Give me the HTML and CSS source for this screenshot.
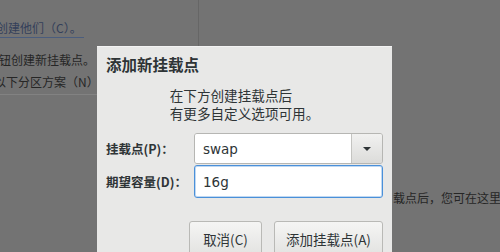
FILE: index.html
```html
<!DOCTYPE html>
<html lang="zh">
<head>
    <meta charset="UTF-8">
    <meta name="viewport" content="width=device-width, initial-scale=1.0">
    <title>添加新挂载点</title>
    <link rel="stylesheet" href="styles.css">
</head>
<body>
    <div class="screen">
        <div class="backdrop">
            <div class="bg-left">
                <p class="bg-line bg-link"><span>创建他们（C）。</span></p>
                <p class="bg-line bg-second">钮创建新挂载点。</p>
                <p class="bg-line bg-third">以下分区方案（N）</p>
            </div>
            <div class="bg-right">
                <p class="bg-note">载点后，您可在这里</p>
            </div>
        </div>

        <div class="dialog">
            <h2 class="dialog-title">添加新挂载点</h2>
            <p class="dialog-msg">在下方创建挂载点后<br>有更多自定义选项可用。</p>

            <div class="form">
                <label class="form-label" for="mount">挂载点(P)：</label>
                <div class="combo">
                    <input id="mount" class="combo-entry" type="text" value="swap">
                    <span class="combo-btn"><span class="arrow"></span></span>
                </div>
                <label class="form-label" for="size">期望容量(D)：</label>
                <input id="size" class="entry focused" type="text" value="16g">
            </div>

            <div class="actions">
                <button class="btn btn-cancel">取消(C)</button>
                <button class="btn btn-add">添加挂载点(A)</button>
            </div>
        </div>
    </div>
</body>
</html>
```

FILE: styles.css
```css
:root {
    --backdrop: #737373;
    --dialog-bg: #e8e8e7;
    --text: #2e3436;
    --focus: #4a90d9;
}

* {
    box-sizing: border-box;
}

body {
    margin: 0;
    width: 500px;
    height: 252px;
    overflow: hidden;
    font-family: "DejaVu Sans", "Noto Sans CJK SC", sans-serif;
    background-color: var(--backdrop);
}

.screen {
    position: relative;
    width: 500px;
    height: 252px;
    overflow: hidden;
}

/* dimmed window behind the dialog */
.backdrop {
    display: flex;
    height: 100%;
    color: #262626;
    font-family: "Noto Sans CJK SC", sans-serif;
    font-size: 12px;
}

.bg-left {
    flex-shrink: 0;
    width: 199px;
    border-right: 1px solid #666;
    overflow: hidden;
    padding-top: 18px;
}

.bg-line {
    margin: 0;
    height: 22px;
    line-height: 20px;
    white-space: nowrap;
}

.bg-link {
    height: 32px;
    color: #34405a;
}

.bg-link span {
    display: inline-block;
    margin-left: -4px;
    padding-right: 2px;
    border-bottom: 1px solid #4b5d7d;
    line-height: 19px;
}

.bg-second {
    margin-left: -1px;
}

.bg-third {
    margin-left: -6px;
    height: 23px;
    border-bottom: 1px solid #828282;
}

.bg-right {
    flex: 1;
    padding: 188px 0 0 194px;
}

.bg-note {
    margin: 0;
    white-space: nowrap;
    line-height: 20px;
}

/* dialog */
.dialog {
    position: absolute;
    left: 97px;
    top: 46px;
    width: 295px;
    height: 230px;
    padding: 7px 9px 0 9px;
    background-color: var(--dialog-bg);
    border-top: 1px solid #f3f3f3;
    color: var(--text);
    font-family: "Noto Sans CJK SC", sans-serif;
}

.dialog-title {
    margin: 0;
    font-size: 15.5px;
    font-weight: bold;
    line-height: 20px;
}

.dialog-msg {
    width: max-content;
    margin: 12px auto 0;
    font-size: 13.6px;
    line-height: 18px;
    white-space: nowrap;
}

.form {
    display: grid;
    grid-template-columns: 88px 1fr;
    row-gap: 1px;
    align-items: center;
    margin-top: 11px;
}

.form-label {
    font-size: 12.5px;
    font-weight: bold;
    white-space: nowrap;
}

.combo {
    display: flex;
    height: 31px;
    border: 1px solid #b6b6b3;
    border-radius: 3px;
    overflow: hidden;
}

.combo-entry,
.entry {
    font-family: "DejaVu Sans", "Noto Sans CJK SC", sans-serif;
    font-size: 13.5px;
    color: var(--text);
    background: white;
    outline: none;
}

.combo-entry {
    flex: 1;
    min-width: 0;
    border: none;
    padding: 0 8px;
}

.combo-btn {
    display: flex;
    align-items: center;
    justify-content: center;
    width: 31px;
    border-left: 1px solid #c4c4c1;
    background: linear-gradient(#f1f1f0, #dcdcda);
}

.arrow {
    width: 0;
    height: 0;
    border-left: 4px solid transparent;
    border-right: 4px solid transparent;
    border-top: 4px solid #2e3436;
}

.entry {
    height: 33px;
    width: 100%;
    border: 1px solid #b6b6b3;
    border-radius: 3px;
    padding: 0 8px;
}

.entry.focused {
    border-color: var(--focus);
    box-shadow: inset 0 0 0 1px rgba(74, 144, 217, 0.35);
}

.actions {
    display: flex;
    justify-content: flex-end;
    gap: 12px;
    margin-top: 23px;
}

.btn {
    height: 36px;
    padding: 0 6px;
    border: 1px solid #b9b9b6;
    border-radius: 3px;
    background: linear-gradient(#f5f5f4, #e2e2e0);
    color: var(--text);
    font-family: "Noto Sans CJK SC", sans-serif;
    font-size: 13.5px;
    white-space: nowrap;
}

.btn-cancel {
    width: 73px;
}

.btn-add {
    width: 109px;
}
```
